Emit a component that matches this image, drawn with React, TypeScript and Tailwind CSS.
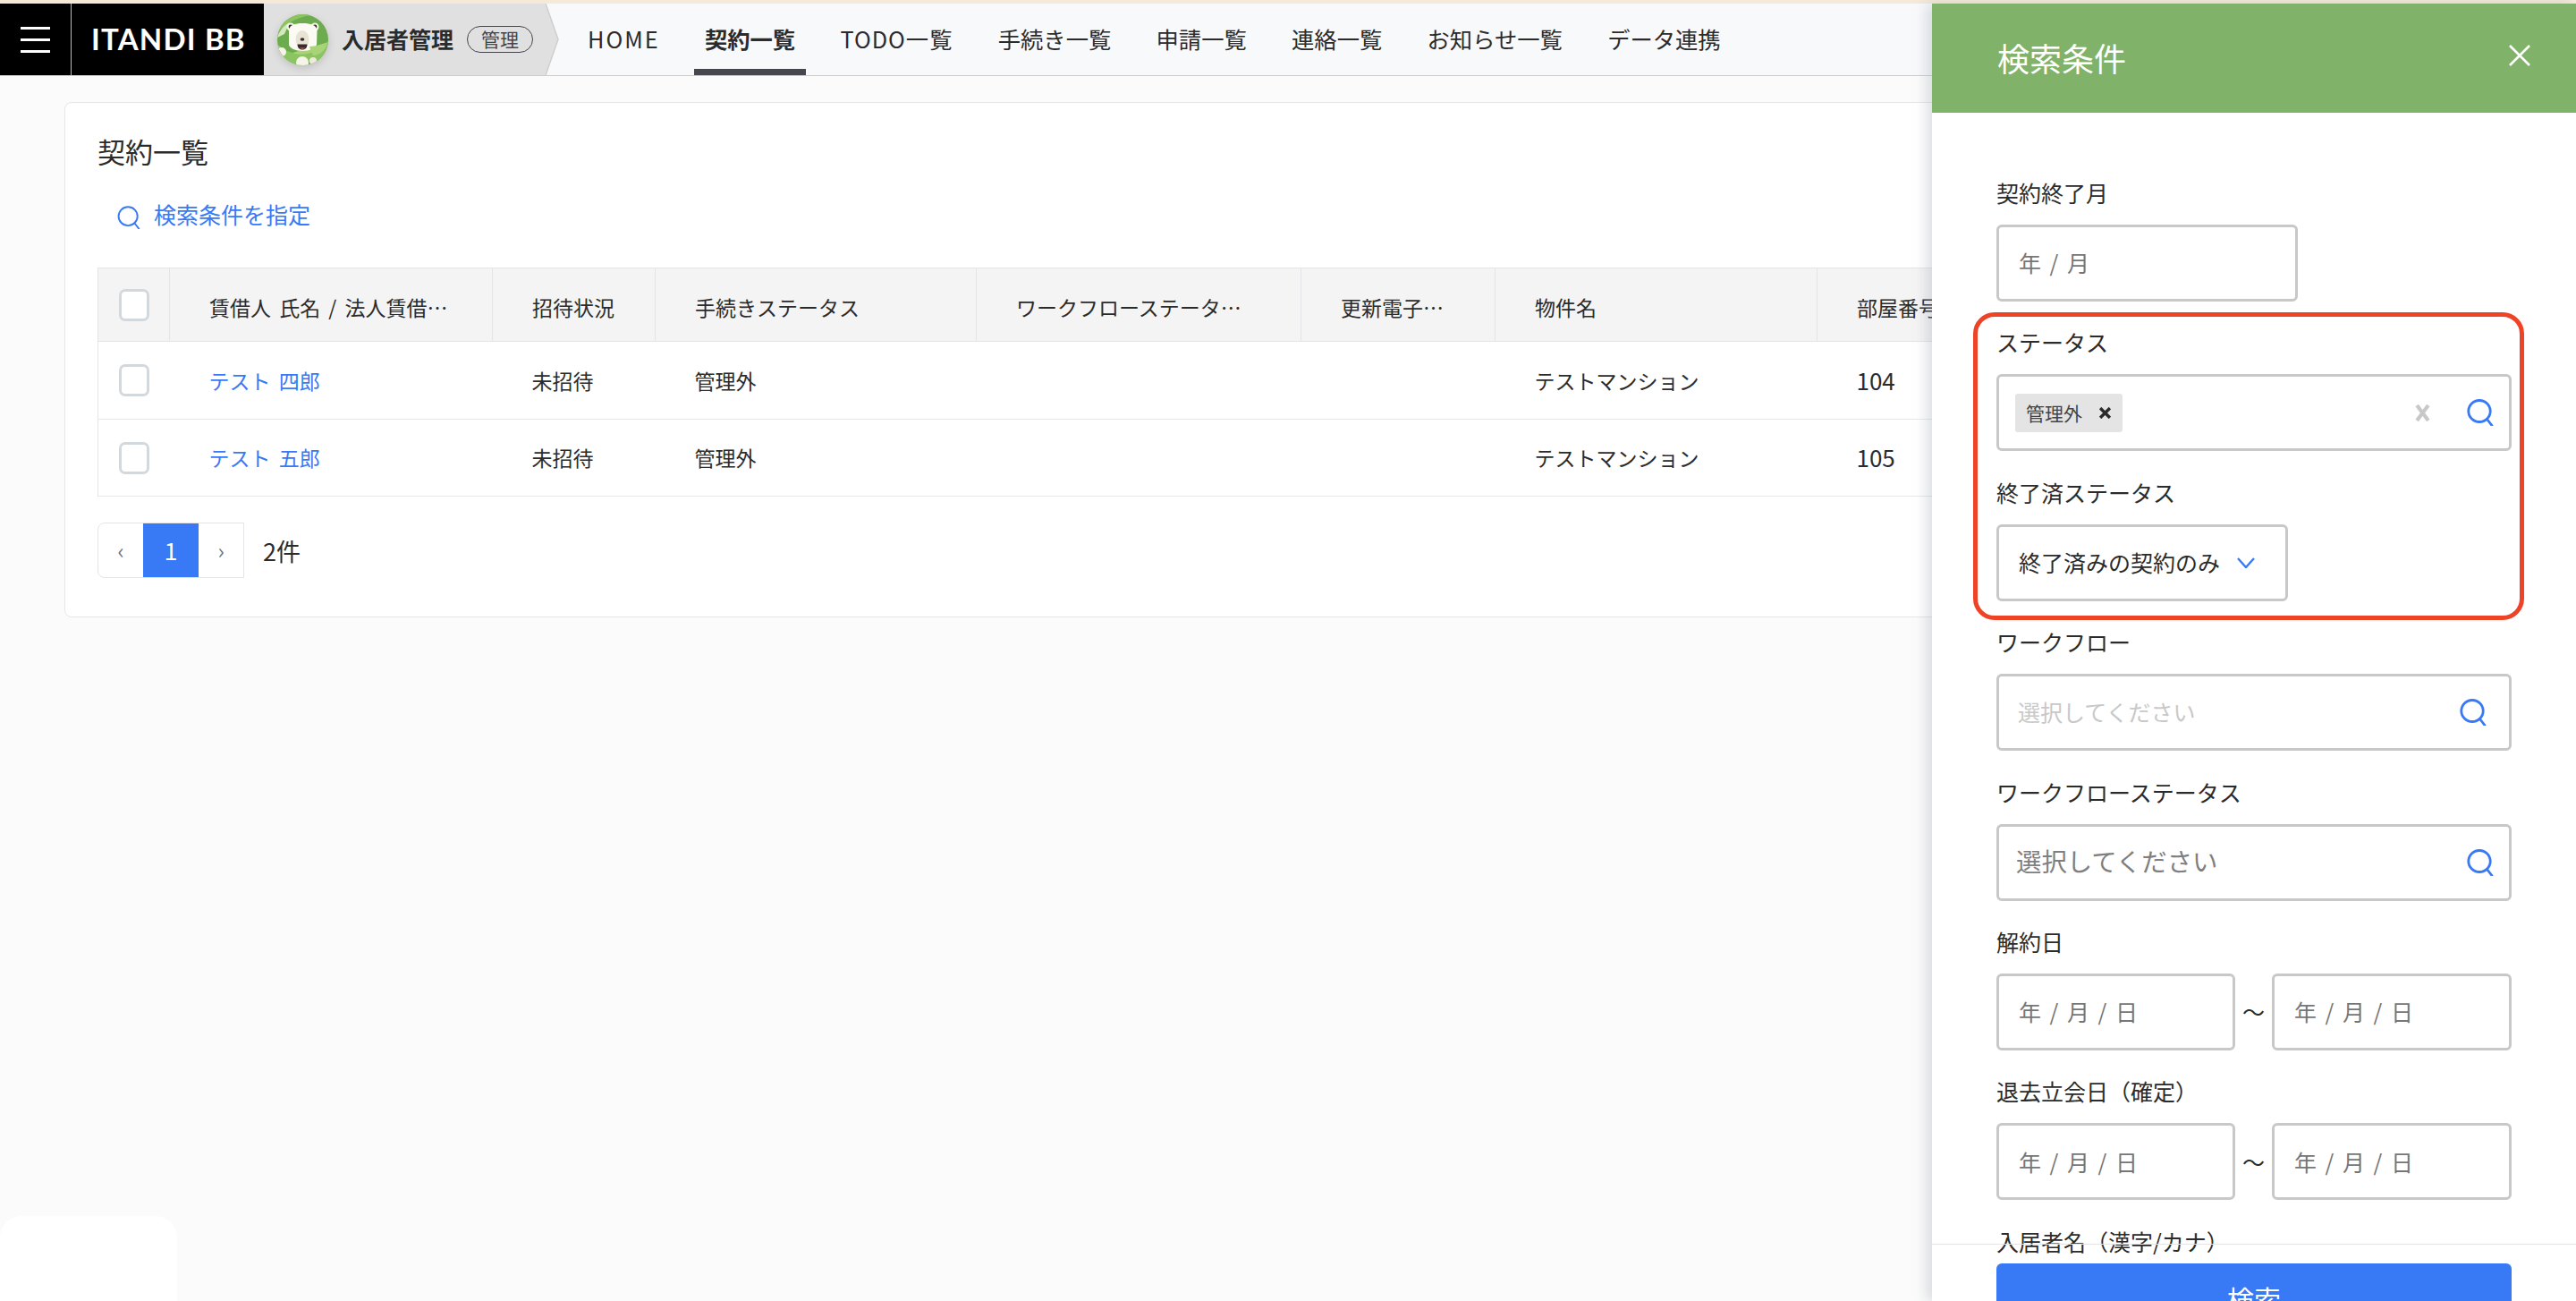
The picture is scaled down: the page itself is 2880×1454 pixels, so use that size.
import { ReactNode } from "react";

const navItems = [
  { label: "HOME", extra: "tracking-[2px]" },
  { label: "契約一覧", extra: "font-bold" },
  { label: "TODO一覧", extra: "tracking-[1px]" },
  { label: "手続き一覧", extra: "" },
  { label: "申請一覧", extra: "" },
  { label: "連絡一覧", extra: "" },
  { label: "お知らせ一覧", extra: "" },
  { label: "データ連携", extra: "" },
];

const rows = [
  { name: "テスト 四郎", room: "104", height: "h-[87px]" },
  { name: "テスト 五郎", room: "105", height: "h-[86px]" },
];

function SearchIcon({ className, stroke = "2.8" }: { className: string; stroke?: string }) {
  return (
    <svg viewBox="0 0 30 30" fill="none" stroke="#3879f6" strokeWidth={stroke} className={className}>
      <ellipse cx="14" cy="13.5" rx="12.2" ry="12" />
      <path d="M22.5 22.5 L28 29.5" strokeLinecap="round" />
    </svg>
  );
}

function BearLogo() {
  return (
    <svg viewBox="0 0 57 57" className="h-[57px] w-[57px] shrink-0 drop-shadow-[0_3px_4px_rgba(0,0,0,0.15)]">
      <defs>
        <clipPath id="bear-clip">
          <circle cx="28.5" cy="28.5" r="28.5" />
        </clipPath>
      </defs>
      <g clipPath="url(#bear-clip)">
        <rect width="57" height="57" fill="#6cac4e" />
        <path d="M0 22 C10 8 26 2 44 0 L20 0 L0 8 Z" fill="#8cc462" />
        <path d="M0 26 C2 18 8 12 14 9 L8 22 Z" fill="#d5e8bd" />
        <path d="M0 34 L14 44 L34 38 L57 31 L50 46 C40 50 20 50 0 46 Z" fill="#a8d477" />
        <circle cx="15" cy="14" r="4.5" fill="#f6f3e8" />
        <circle cx="42" cy="14" r="4.5" fill="#f6f3e8" />
        <circle cx="15" cy="14" r="2.4" fill="#3a3230" />
        <circle cx="42" cy="14" r="2.4" fill="#3a3230" />
        <path d="M13 18 C13 12 20 10 28.5 10 C37 10 44 12 44.5 18 L44 34 C42 38 36 41 28.5 41 C20 41 14 38 13 34 Z" fill="#fbfaf3" />
        <ellipse cx="28" cy="28" rx="7.5" ry="10" fill="#e8e3d5" />
        <ellipse cx="28" cy="28" rx="2.4" ry="1.8" fill="#3a3230" />
        <path d="M22.5 33.5 H33.5 C33.5 38 30.5 39.5 28 39.5 C25.5 39.5 22.5 38 22.5 33.5 Z" fill="#3a2a28" />
        <path d="M25 37.5 H31 C30 39 26 39 25 37.5 Z" fill="#e2674f" />
        <path d="M0 38 C8 40 14 42 20 44 C30 46 40 44 48 36 L57 33 L50 52 L0 57 Z" fill="#8cc462" />
        <path d="M36 36 L56 34 C52 42 46 46 40 46 C38 42 37 39 36 36 Z" fill="#a8d477" />
        <circle cx="5" cy="42" r="5" fill="#f6f3e8" />
        <circle cx="28" cy="54" r="7" fill="#f6f3e8" />
        <circle cx="40" cy="52" r="4" fill="#ecebd8" />
      </g>
    </svg>
  );
}

function Field({ label, children }: { label: string; children: ReactNode }) {
  return (
    <div className="mb-[29.4px]">
      <div className="-mt-[2px] mb-[18px] h-9 text-[25px] leading-9 text-[#2b2b2b]">{label}</div>
      {children}
    </div>
  );
}

function Box({ className, children }: { className: string; children: ReactNode }) {
  return (
    <div className={`flex h-[86px] items-center rounded-[6px] border-[3px] border-[#c8c8c8] bg-white [word-spacing:4px] ${className}`}>
      {children}
    </div>
  );
}

function DateRange() {
  return (
    <div className="flex items-center justify-between">
      <Box className="w-[267px] pl-[22px] text-[25px] text-[#767676]">年 / 月 / 日</Box>
      <span className="text-[25px] text-[#2b2b2b]">〜</span>
      <Box className="w-[268px] pl-[22px] text-[25px] text-[#767676]">年 / 月 / 日</Box>
    </div>
  );
}

export default function App() {
  return (
    <div className="relative h-[1454px] w-[2880px] overflow-hidden bg-[#fbfbfb] font-['Noto_Sans_CJK_JP',sans-serif] text-[#2b2b2b]">
      <div className="h-1 bg-[#f5e9d8]" />

      <header className="flex h-[81px] border-b-[1.5px] border-[#cccccc] bg-[#f8f9fb]">
        <div className="flex w-[295px] shrink-0 bg-black">
          <div className="flex w-[80px] flex-col items-center justify-center gap-[10px] border-r border-[#bbbbbb]">
            <span className="h-[3px] w-[33px] bg-white" />
            <span className="h-[3px] w-[33px] bg-white" />
            <span className="h-[3px] w-[33px] bg-white" />
          </div>
          <div className="flex flex-1 items-center pl-[22px] font-['Lato',sans-serif] text-[33px] font-bold tracking-[1.2px] whitespace-nowrap text-white">
            ITANDI BB
          </div>
        </div>
        <div className="flex w-[315px] shrink-0 items-center bg-[#e0e0e0] pl-[15px]">
          <BearLogo />
          <span className="ml-[15px] text-[25px] font-bold whitespace-nowrap">入居者管理</span>
          <span className="ml-[15px] flex h-[30px] w-[74px] items-center justify-center rounded-full border-[1.5px] border-[#47454d] text-[21px] text-[#47454d]">
            管理
          </span>
        </div>
        <svg viewBox="0 0 16 80" className="h-20 w-4 shrink-0">
          <path d="M0 0 L14 40 L0 80 Z" fill="#e0e0e0" />
          <path d="M0 0 L14 40 L0 80" fill="none" stroke="#cfcfcf" strokeWidth="1.5" />
        </svg>
        <nav className="ml-[19px] flex gap-[26.3px]">
          {navItems.map((item) => (
            <a
              key={item.label}
              className={
                item.label === "契約一覧"
                  ? `flex items-center border-b-[7px] border-[#47454d] px-3 pt-[7px] text-[25.3px] whitespace-nowrap ${item.extra}`
                  : `flex items-center px-3 text-[25.3px] whitespace-nowrap ${item.extra}`
              }
            >
              {item.label}
            </a>
          ))}
        </nav>
      </header>

      <main className="mt-[29px] mr-[72px] ml-[72px] h-[576px] rounded-[8px] border-[1.5px] border-[#e6e6e6] bg-white px-[36px] pt-[33px]">
        <h1 className="text-[31px] leading-[42px] font-normal">契約一覧</h1>
        <a className="mt-[30px] ml-[22px] flex h-[40px] items-center gap-[15px] text-[25px] text-[#3879f6]">
          <SearchIcon className="mt-[5px] h-[26px] w-[26px]" stroke="2.2" />
          検索条件を指定
        </a>
        <table className="mt-[39px] w-full table-fixed border-collapse border border-[#e3e5e8] text-[23px] [word-spacing:4px]">
          <colgroup>
            <col className="w-[80px]" />
            <col className="w-[361px]" />
            <col className="w-[182px]" />
            <col className="w-[359px]" />
            <col className="w-[363px]" />
            <col className="w-[217px]" />
            <col className="w-[360px]" />
            <col />
          </colgroup>
          <thead>
            <tr className="h-[82px] bg-[#f4f4f5] text-left">
              <th className="border-r border-b border-[#e3e5e8] font-normal">
                <span className="mx-auto block h-9 w-[34px] rounded-[7px] border-[3px] border-[#d3d8dd] bg-white" />
              </th>
              {["賃借人 氏名 / 法人賃借…", "招待状況", "手続きステータス", "ワークフローステータ…", "更新電子…", "物件名", "部屋番号", ""].map((h, i) => (
                <th key={i} className="border-r border-b border-[#e3e5e8] pt-[6px] pl-[44px] font-normal whitespace-nowrap">
                  {h}
                </th>
              ))}
            </tr>
          </thead>
          <tbody>
            {rows.map((r) => (
              <tr key={r.room} className={`${r.height} border-b border-[#e6e8eb]`}>
                <td>
                  <span className="mx-auto block h-9 w-[34px] rounded-[7px] border-[3px] border-[#d3d8dd] bg-white" />
                </td>
                <td className="pl-[44px] text-[#3879f6]">{r.name}</td>
                <td className="pl-[44px]">未招待</td>
                <td className="pl-[44px]">管理外</td>
                <td />
                <td />
                <td className="pl-[44px]">テストマンション</td>
                <td className="pl-[44px] pb-[2px] text-[26px]">{r.room}</td>
                <td />
              </tr>
            ))}
          </tbody>
        </table>
        <div className="mt-[29px] flex items-center">
          <div className="flex h-[62px] w-[164px] overflow-hidden rounded-l-[8px] border border-[#e3e5e8] text-[#6b7280]">
            <span className="flex w-[50px] items-center justify-center text-[24px]">‹</span>
            <span className="flex w-[62px] items-center justify-center bg-[#3879f6] text-[27px] text-white">1</span>
            <span className="flex flex-1 items-center justify-center text-[24px]">›</span>
          </div>
          <span className="ml-[21px] pt-[2px] text-[27px]">2件</span>
        </div>
      </main>

      {/* chat widget corner, bottom left */}
      <div className="absolute bottom-0 left-0 h-[95px] w-[198px] rounded-t-[24px] bg-white" />

      <aside className="absolute top-1 right-0 bottom-0 flex w-[720px] flex-col overflow-hidden bg-white shadow-[-6px_0_14px_rgba(150,160,175,0.35)]">
        <div className="flex h-[122px] shrink-0 items-center justify-between bg-[#80b369] pr-[51px] pl-[73px] text-white">
          <span className="mb-[2px] text-[36px]">検索条件</span>
          <svg viewBox="0 0 24 24" className="mb-[6px] h-6 w-6" stroke="white" strokeWidth="2.6" fill="none">
            <path d="M1 1 L23 23 M23 1 L1 23" />
          </svg>
        </div>
        <div className="relative h-[1276px] shrink-0 overflow-hidden px-[72px] pt-[73px]">
          <Field label="契約終了月">
            <Box className="w-[337px] pl-[22px] text-[25px] text-[#767676]">年 / 月</Box>
          </Field>
          <Field label="ステータス">
            <Box className="pr-[17px] pl-[18px]">
              <span className="flex h-[43px] w-[120px] items-center gap-[19px] rounded-[3px] bg-[#e4e4e4] pl-3 text-[21px] text-[#444444]">
                管理外
                <svg viewBox="0 0 12 12" className="h-[13px] w-[13px]" stroke="#2b2b2b" strokeWidth="3.2" fill="none">
                  <path d="M1 1 L11 11 M11 1 L1 11" />
                </svg>
              </span>
              <svg viewBox="0 0 16 18" className="ml-auto h-[19px] w-[17px]" stroke="#c8c8c8" strokeWidth="4" fill="none">
                <path d="M2 1 L14 17 M14 1 L2 17" />
              </svg>
              <SearchIcon className="ml-[41px] h-[30px] w-[30px]" />
            </Box>
          </Field>
          <Field label="終了済ステータス">
            <Box className="w-[326px] pl-[22px] text-[25px]">
              終了済みの契約のみ
              <svg viewBox="0 0 20 12" className="ml-[19px] h-3 w-5" stroke="#3879f6" strokeWidth="2.4" fill="none">
                <path d="M1 1 L10 11 L19 1" />
              </svg>
            </Box>
          </Field>
          <Field label="ワークフロー">
            <Box className="justify-between pr-[25px] pl-[21px] text-[25px] text-[#c8c8c8]">
              選択してください
              <SearchIcon className="h-[30px] w-[30px]" />
            </Box>
          </Field>
          <Field label="ワークフローステータス">
            <Box className="justify-between pr-[17px] pl-[19px] text-[28.4px] text-[#7f7f7f]">
              <span className="pb-[2px]">選択してください</span>
              <SearchIcon className="h-[30px] w-[30px]" />
            </Box>
          </Field>
          <Field label="解約日">
            <DateRange />
          </Field>
          <Field label="退去立会日（確定）">
            <DateRange />
          </Field>
          <Field label="入居者名（漢字/カナ）">
            <Box className="w-full">{null}</Box>
          </Field>
          <div className="absolute right-0 bottom-[11px] left-0 h-[1.5px] bg-[#e4e4e4]" />
        </div>
        <div className="px-[72px] pt-[10px]">
          <button className="h-[76px] w-full rounded-[6px] bg-[#3879f6] pt-[2px] text-[30px] text-white">検索</button>
        </div>
      </aside>

      {/* red annotation around the two status fields */}
      <div className="absolute top-[349px] left-[2206px] h-[344px] w-[616px] rounded-[24px] border-[5px] border-[#ee4326]" />
    </div>
  );
}
